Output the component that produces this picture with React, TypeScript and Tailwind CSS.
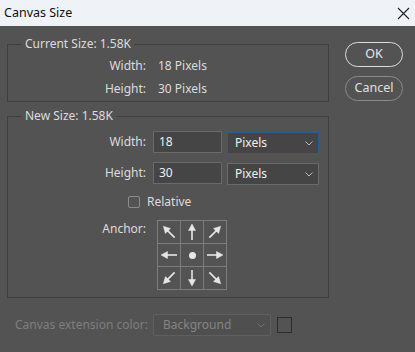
import React from "react";

const font = { fontFamily: '"Noto Sans", "Open Sans", sans-serif' };

function Chevron({ dim }: { dim?: boolean }) {
  return (
    <svg width="8" height="5" viewBox="0 0 8 5" className="shrink-0">
      <polyline
        points="0.5,0.5 4,4 7.5,0.5"
        fill="none"
        stroke={dim ? "#6e6e6e" : "#b8b8b8"}
        strokeWidth="1"
      />
    </svg>
  );
}

function Arrow({ rotate }: { rotate: number }) {
  return (
    <svg width="22" height="22" viewBox="0 0 22 22">
      <g transform={`rotate(${rotate} 11 11)`} fill="#e6e6e6" stroke="#e6e6e6">
        <line x1="11" y1="19" x2="11" y2="8" strokeWidth="1.6" />
        <polygon points="11,3 7.5,9.5 14.5,9.5" strokeWidth="0.5" />
      </g>
    </svg>
  );
}

const anchorCells = [-45, 0, 45, -90, null, 90, -135, 180, 135];

export default function App() {
  return (
    <div
      className="flex h-[352px] w-[415px] flex-col overflow-hidden bg-[#535353] text-[12px] text-[#dcdcdc]"
      style={font}
    >
      <div className="flex h-[26px] shrink-0 items-center justify-between bg-[#eff3f8] pl-[4px] pr-[5px] text-[12.5px] text-[#111]">
        <span>Canvas Size</span>
        <svg width="13" height="13" viewBox="0 0 13 13">
          <path d="M1 1 L12 12 M12 1 L1 12" stroke="#222" strokeWidth="1.1" />
        </svg>
      </div>

      <div className="flex flex-1">
        <div className="flex w-[329px] flex-col pl-[7px]">
          <fieldset className="mt-[10px] h-[66px] border border-[#3f3f3f]">
            <legend className="ml-[14px] px-[3px] leading-[16px]">Current Size: 1.58K</legend>
            <div className="mt-[6px] flex flex-col gap-[7px] leading-[16px]">
              <div className="flex">
                <span className="w-[138px] text-right">Width:</span>
                <span className="ml-[12px]">18 Pixels</span>
              </div>
              <div className="flex">
                <span className="w-[138px] text-right">Height:</span>
                <span className="ml-[12px]">30 Pixels</span>
              </div>
            </div>
          </fieldset>

          <fieldset className="mt-[6px] h-[190px] border border-[#3f3f3f]">
            <legend className="ml-[14px] px-[3px] leading-[16px]">New Size: 1.58K</legend>
            <div className="mt-[6px] flex items-center">
              <span className="w-[138px] text-right">Width:</span>
              <div className="ml-[7px] flex h-[22px] w-[69px] items-center border border-[#6a6a6a] bg-[#454545] px-[5px] text-[#f0f0f0]">
                18
              </div>
              <div className="ml-[5px] mt-[2px] flex h-[22px] w-[92px] items-center justify-between border border-[#2e5b94] bg-[#454545] pl-[7px] pr-[5px] text-[#f0f0f0]">
                <span>Pixels</span>
                <Chevron />
              </div>
            </div>
            <div className="mt-[7px] flex items-center">
              <span className="w-[138px] text-right">Height:</span>
              <div className="ml-[7px] flex h-[22px] w-[69px] items-center border border-[#6a6a6a] bg-[#454545] px-[5px] text-[#f0f0f0]">
                30
              </div>
              <div className="ml-[5px] mt-[2px] flex h-[22px] w-[92px] items-center justify-between border border-[#6a6a6a] bg-[#454545] pl-[7px] pr-[5px] text-[#f0f0f0]">
                <span>Pixels</span>
                <Chevron />
              </div>
            </div>
            <div className="mt-[9px] flex items-center">
              <span className="ml-[120px] h-[12px] w-[12px] rounded-[2px] border border-[#8c8c8c]" />
              <span className="ml-[7px] leading-[16px]">Relative</span>
            </div>
            <div className="mt-[10px] flex items-start">
              <span className="mt-[1px] w-[138px] text-right leading-[16px]">Anchor:</span>
              <div className="ml-[11px] grid grid-cols-[repeat(3,23px)] grid-rows-[repeat(3,23px)] border-l border-t border-[#7c7c7c]">
                {anchorCells.map((r, i) => (
                  <div
                    key={i}
                    className="flex items-center justify-center border-b border-r border-[#7c7c7c]"
                  >
                    {r === null ? (
                      <span className="h-[7px] w-[7px] rounded-full bg-[#e6e6e6]" />
                    ) : (
                      <Arrow rotate={r} />
                    )}
                  </div>
                ))}
              </div>
            </div>
          </fieldset>

          <div className="mt-[16px] flex items-center text-[#7e7e7e]">
            <span className="ml-[8px] w-[138px] whitespace-nowrap leading-[16px]">
              Canvas extension color:
            </span>
            <div className="flex h-[22px] w-[118px] items-center justify-between rounded-[2px] border border-[#5f5f5f] bg-[#4f4f4f] pl-[9px] pr-[5px] text-[#858585]">
              <span>Background</span>
              <Chevron dim />
            </div>
            <span className="ml-[6px] h-[16px] w-[15px] border border-[#2c2c2c]" />
          </div>
        </div>

        <div className="ml-[16px] flex flex-col">
          <button className="mt-[16px] h-[25px] w-[58px] rounded-full border-[1.5px] border-[#dcdcdc] text-[12.5px] text-[#e6e6e6]">
            OK
          </button>
          <button className="mt-[9px] h-[25px] w-[58px] rounded-full border border-[#8a8a8a] text-[12.5px] text-[#e0e0e0]">
            Cancel
          </button>
        </div>
      </div>
    </div>
  );
}
